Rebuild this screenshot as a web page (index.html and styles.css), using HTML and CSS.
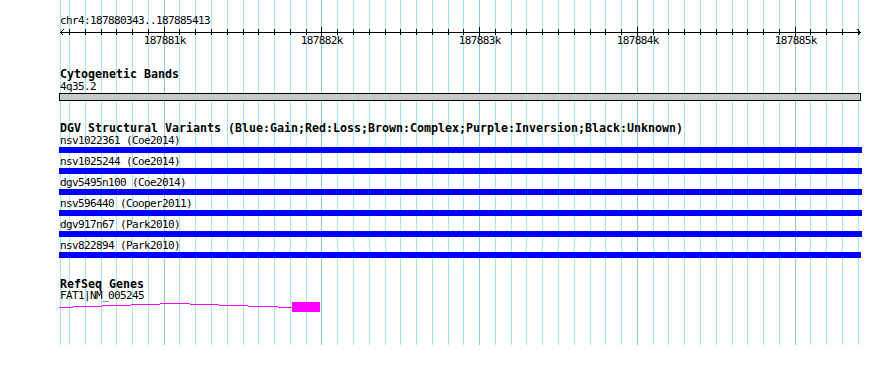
FILE: index.html
```html
<!DOCTYPE html>
<html lang="en">
<head>
  <meta charset="UTF-8">
  <title>chr4:187880343..187885413</title>
  <link rel="stylesheet" href="styles.css">
</head>
<body>
  <div class="browser">
    <svg class="grid" id="grid" width="890" height="345"></svg>

    <div class="overview">
      <div class="range">chr4:187880343..187885413</div>
      <svg class="axis" id="axis" width="890" height="21"></svg>
    </div>

    <div class="track cyto">
      <div class="track-title">Cytogenetic Bands</div>
      <div class="label">4q35.2</div>
      <div class="band"></div>
    </div>

    <div class="track dgv">
      <div class="track-title">DGV Structural Variants (Blue:Gain;Red:Loss;Brown:Complex;Purple:Inversion;Black:Unknown)</div>
      <div class="feature"><div class="label">nsv1022361 (Coe2014)</div><div class="bar"></div></div>
      <div class="feature"><div class="label">nsv1025244 (Coe2014)</div><div class="bar"></div></div>
      <div class="feature"><div class="label">dgv5495n100 (Coe2014)</div><div class="bar"></div></div>
      <div class="feature"><div class="label">nsv596440 (Cooper2011)</div><div class="bar"></div></div>
      <div class="feature"><div class="label">dgv917n67 (Park2010)</div><div class="bar"></div></div>
      <div class="feature"><div class="label">nsv822894 (Park2010)</div><div class="bar short"></div></div>
    </div>

    <div class="track genes">
      <div class="track-title gene-title">RefSeq Genes</div>
      <div class="gene-label">FAT1|NM_005245</div>
      <svg class="gene" width="890" height="12">
        <polyline class="intron" points="59,5.5 175,1.5 292,5.5"></polyline>
        <rect class="exon" x="292" y="0" width="28" height="10"></rect>
      </svg>
    </div>
  </div>

  <script>
    var NS = 'http://www.w3.org/2000/svg';
    var start = 187880343, end = 187885413;
    var left = 60, width = 800;
    var scale = width / (end - start + 1);

    function px(pos){ return Math.round(left + (pos - start) * scale); }

    function el(name, attrs){
      var node = document.createElementNS(NS, name);
      for(var k in attrs){ node.setAttribute(k, attrs[k]); }
      return node;
    }

    var grid = document.getElementById('grid');
    var axis = document.getElementById('axis');

    // 起始竖线
    grid.appendChild(el('line', {x1: left + .5, x2: left + .5, y1: 0, y2: 345, 'class': 'minor'}));

    // 主轴和箭头
    axis.appendChild(el('line', {x1: left, x2: left + width, y1: 5.5, y2: 5.5, 'class': 'rule'}));
    axis.appendChild(el('polyline', {points: '63.5,2.5 60.5,5.5 63.5,8.5', 'class': 'rule'}));
    axis.appendChild(el('polyline', {points: '857.5,2.5 860.5,5.5 857.5,8.5', 'class': 'rule'}));

    for(var pos = Math.ceil(start / 100) * 100; pos <= end; pos += 100){
      var x = px(pos) + .5;
      var major = pos % 1000 === 0;
      grid.appendChild(el('line', {x1: x, x2: x, y1: 0, y2: 345, 'class': major ? 'major' : 'minor'}));
      axis.appendChild(el('line', {x1: x, x2: x, y1: major ? 0 : 2, y2: major ? 10 : 8, 'class': 'rule'}));
      if(major){
        var t = el('text', {x: x + .3, y: 17, 'class': 'tick-label'});
        t.textContent = (pos / 1000) + 'k';
        axis.appendChild(t);
      }
    }
  </script>
</body>
</html>
```

FILE: styles.css
```css
*{
  margin: 0;
  padding: 0;
  box-sizing: border-box;
}
body{
  background: #fff;
  color: #000;
  font-family: "DejaVu Sans Mono", "Liberation Mono", monospace;
  font-size: 11px;
  letter-spacing: -0.62px;
}
.browser{
  position: relative;
  width: 890px;
  height: 365px;
  overflow: hidden;
}
svg{
  display: block;
  shape-rendering: crispEdges;
}
.grid{
  position: absolute;
  left: 0;
  top: 0;
}
.grid .minor{ stroke: #a4e8ee; stroke-width: 1; }
.grid .major{ stroke: #8ec8e6; stroke-width: 1; }

.overview,
.track{
  position: relative;
}
.range{
  padding-top: 14px;
  margin-left: 60px;
  line-height: 13px;
}
.axis .rule{
  stroke: #000;
  stroke-width: 1;
  fill: none;
}
.axis .tick-label{
  font-family: "DejaVu Sans Mono", "Liberation Mono", monospace;
  font-size: 11px;
  letter-spacing: -0.62px;
  text-anchor: middle;
  fill: #000;
}

.track-title{
  margin-left: 60px;
  font-weight: bold;
  font-size: 11.63px;
  letter-spacing: 0;
  line-height: 12px;
  white-space: nowrap;
}
.label{
  margin-left: 60px;
  line-height: 13px;
  white-space: nowrap;
}

.cyto{ margin-top: 20px; }
.band{
  margin-left: 59px;
  width: 802px;
  height: 8px;
  border: 1px solid #000;
  background: #c8c8c8;
}

.dgv{ margin-top: 21px; }
.feature{ margin-bottom: 2px; }
.bar{
  margin-left: 59px;
  width: 803px;
  height: 6px;
  background: #0000ff;
}
.bar.short{ width: 802px; }

.genes{ margin-top: 21px; }
.gene-title{ line-height: 11px; }
.gene-label{
  margin-left: 60px;
  line-height: 12px;
  white-space: nowrap;
}
.gene .intron{
  stroke: #ff00ff;
  stroke-width: 1;
  fill: none;
}
.gene .exon{ fill: #ff00ff; }
```
